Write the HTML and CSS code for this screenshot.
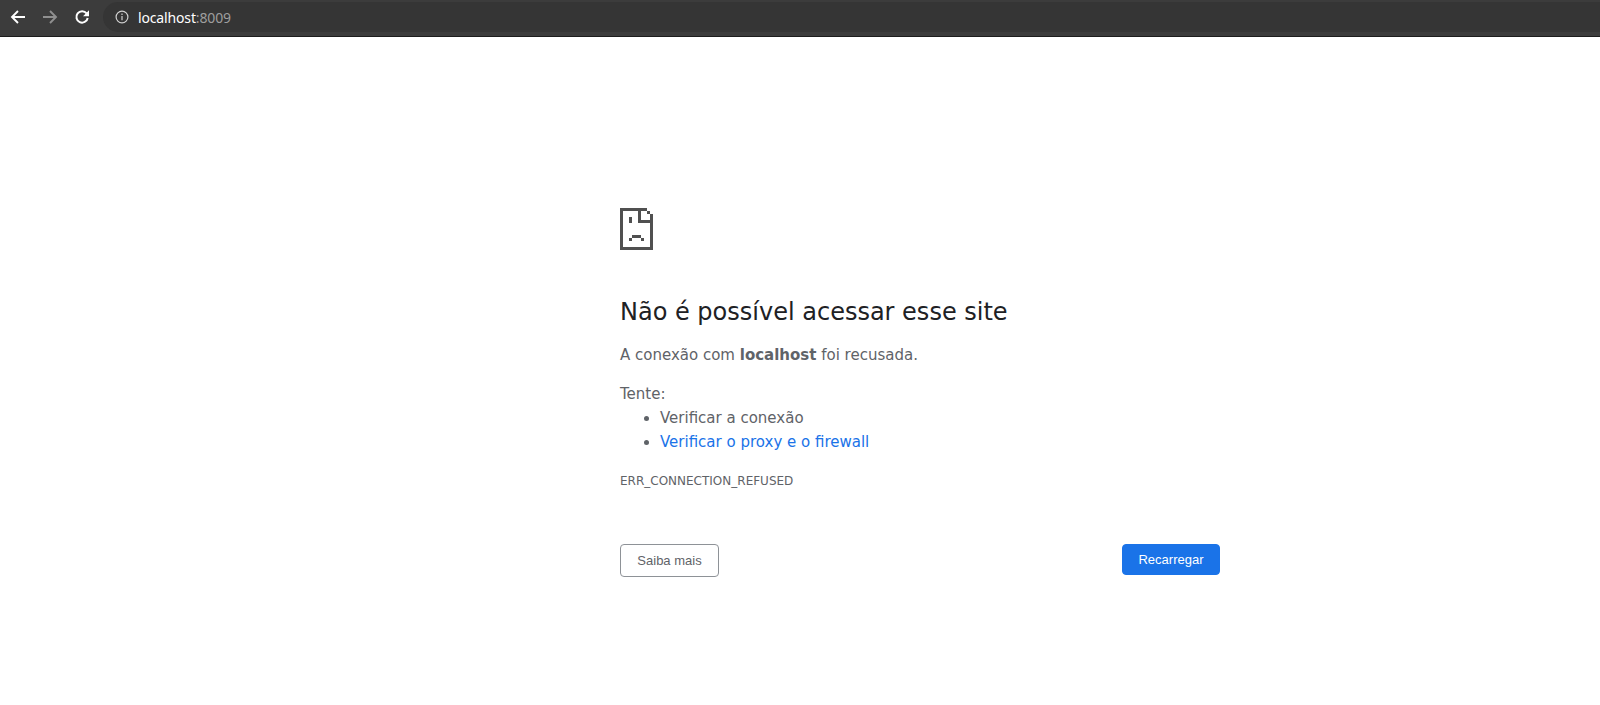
FILE: index.html
```html
<!DOCTYPE html>
<html lang="pt-BR">
<head>
  <meta charset="UTF-8">
  <title>localhost</title>
  <link rel="stylesheet" href="styles.css">
</head>
<body>

  <div class="toolbar">
    <svg class="nav-icon" viewBox="0 0 16 16" fill="none" stroke="#fff" stroke-width="1.9">
      <path d="M15 8H2M8 2 2 8l6 6"/>
    </svg>
    <svg class="nav-icon" viewBox="0 0 16 16" fill="none" stroke="#8f8f8f" stroke-width="1.9">
      <path d="M1 8h13M8 2l6 6-6 6"/>
    </svg>
    <svg class="nav-icon" viewBox="0 0 16 16" fill="none" stroke="#fff" stroke-width="2">
      <path d="M12.6 4.4A5.7 5.7 0 1 0 13.7 9"/>
      <path d="M15 1.2v6H9z" fill="#fff" stroke="none"/>
    </svg>
    <div class="omnibox">
      <svg class="info-icon" viewBox="0 0 14 14" fill="none" stroke="#d0d0d0" stroke-width="1.2">
        <circle cx="7" cy="7" r="5.9"/>
        <path d="M7 6v4.2M7 3.6v1.3"/>
      </svg>
      <span class="host">localhost</span><span class="port">:8009</span>
    </div>
  </div>

  <div class="page">
    <div class="content">
      <svg class="sad-tab" viewBox="0 0 33 42" fill="#505050" shape-rendering="crispEdges">
        <path d="M0 0h27v3H3v36h27V9h3v33H0z"/>
        <path d="M18 3h3v9h12v3H18z"/>
        <path d="M27 3h3v3h-3zM30 6h3v3h-3z"/>
        <path d="M9 9h3v6H9z"/>
        <path d="M12 27h9v3h-9zM9 30h3v3H9zM21 30h3v3h-3z"/>
      </svg>

      <h1>Não é possível acessar esse site</h1>
      <p class="summary">A conexão com <strong>localhost</strong> foi recusada.</p>

      <div class="suggestions">
        <p>Tente:</p>
        <ul>
          <li>Verificar a conexão</li>
          <li><a href="#">Verificar o proxy e o firewall</a></li>
        </ul>
      </div>

      <div class="error-code">ERR_CONNECTION_REFUSED</div>

      <div class="buttons">
        <button class="btn-details">Saiba mais</button>
        <button class="btn-reload">Recarregar</button>
      </div>
    </div>
  </div>

</body>
</html>
```

FILE: styles.css
```css
body {
  margin: 0;
  background: #fff;
  font-family: 'DejaVu Sans', sans-serif;
  color: #5f6368;
}

.toolbar {
  display: flex;
  align-items: center;
  height: 30px;
  padding: 2px 0 4px 10px;
  background: #3c3c3c;
  border-bottom: 1px solid #1c1c1c;
}

.nav-icon {
  width: 16px;
  height: 16px;
  margin-right: 16px;
}

.omnibox {
  flex: 1;
  display: flex;
  align-items: center;
  height: 30px;
  margin-left: -3px;
  padding-left: 12px;
  border-radius: 15px 0 0 15px;
  background: #353535;
  font-family: 'Noto Sans', sans-serif;
  font-size: 14px;
  letter-spacing: -0.15px;
}

.info-icon {
  width: 14px;
  height: 14px;
  margin-right: 9px;
}

.host {
  color: #fff;
}

.port {
  color: #9e9e9e;
}

.content {
  width: 600px;
  margin-left: 620px;
  padding-top: 171px;
}

.sad-tab {
  display: block;
  width: 33px;
  height: 42px;
}

h1 {
  margin: 47px 0 0;
  font-size: 24px;
  font-weight: 400;
  line-height: 30px;
  color: #202124;
}

.summary {
  margin: 16px 0 0;
  font-size: 15px;
  line-height: 24px;
}

.summary strong {
  font-weight: 700;
}

.suggestions {
  margin-top: 15px;
  font-size: 15px;
  line-height: 24px;
}

.suggestions p {
  margin: 0;
}

.suggestions ul {
  margin: 0;
  padding-left: 40px;
}

.suggestions a {
  color: #1a73e8;
  text-decoration: none;
}

.error-code {
  margin-top: 18px;
  font-size: 12px;
  line-height: 18px;
  text-transform: uppercase;
}

.buttons {
  display: flex;
  justify-content: space-between;
  align-items: flex-start;
  margin-top: 54px;
}

button {
  font-family: 'Liberation Sans', sans-serif;
  font-size: 13px;
  border-radius: 4px;
  box-sizing: border-box;
}

.btn-details {
  width: 99px;
  height: 33px;
  background: #fff;
  border: 1px solid #8e9297;
  color: #5f6368;
}

.btn-reload {
  width: 98px;
  height: 31px;
  background: #1a73e8;
  border: 1px solid #1a73e8;
  color: #fff;
}
```
